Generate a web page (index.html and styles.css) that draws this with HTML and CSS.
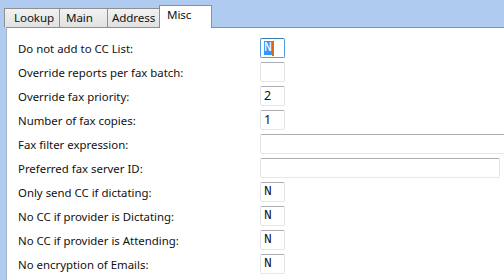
FILE: index.html
```html
<!DOCTYPE html>
<html lang="en">
<head>
    <meta charset="UTF-8">
    <title>Misc</title>
    <link rel="stylesheet" href="styles.css">
</head>
<body>
    <div class="tabs">
        <div class="tab lookup">Lookup</div>
        <div class="tab main">Main</div>
        <div class="tab address">Address</div>
        <div class="tab active">Misc</div>
    </div>
    <div class="panel">
        <div class="row">
            <label>Do not add to CC List:</label>
            <div class="box small focused mono"><span class="sel">N</span><span class="caret"></span></div>
        </div>
        <div class="row">
            <label>Override reports per fax batch:</label>
            <div class="box small"></div>
        </div>
        <div class="row">
            <label>Override fax priority:</label>
            <div class="box small">2</div>
        </div>
        <div class="row">
            <label>Number of fax copies:</label>
            <div class="box small">1</div>
        </div>
        <div class="row">
            <label>Fax filter expression:</label>
            <div class="box wide clipped"></div>
        </div>
        <div class="row">
            <label>Preferred fax server ID:</label>
            <div class="box wide"></div>
        </div>
        <div class="row">
            <label>Only send CC if dictating:</label>
            <div class="box small mono">N</div>
        </div>
        <div class="row">
            <label>No CC if provider is Dictating:</label>
            <div class="box small mono">N</div>
        </div>
        <div class="row">
            <label>No CC if provider is Attending:</label>
            <div class="box small mono">N</div>
        </div>
        <div class="row">
            <label>No encryption of Emails:</label>
            <div class="box small mono">N</div>
        </div>
    </div>
</body>
</html>
```

FILE: styles.css
```css
*{
    margin: 0;
    padding: 0;
    box-sizing: border-box;
}
body{
    width: 504px;
    height: 280px;
    overflow: hidden;
    background-color: #afcbef;
    font-family: "Noto Sans", "Open Sans", sans-serif;
    font-size: 11.4px;
    color: #111;
}
.tabs{
    display: flex;
    align-items: flex-end;
    height: 27px;
    padding-left: 4px;
}
.tab{
    height: 19px;
    padding-left: 6px;
    line-height: 18px;
    font-size: 11.6px;
    letter-spacing: -0.1px;
    white-space: nowrap;
    background: linear-gradient(#f2f2f2, #e1e1e1);
    border: 1px solid #8e8f8f;
    border-bottom: none;
    margin-right: -1px;
}
.lookup{
    width: 56px;
    padding-left: 9px;
}
.main{
    width: 49px;
}
.address{
    width: 53px;
    padding-left: 4px;
}
.tab.active{
    width: 53px;
    height: 23px;
    line-height: 18px;
    background: #fff;
    padding-left: 7px;
    margin-bottom: -1px;
    position: relative;
    z-index: 1;
}
.panel{
    margin-left: 6px;
    height: 260px;
    background-color: #fff;
    border-top: 1px solid #8e8f8f;
    border-left: 1px solid #a9b5c6;
    padding: 10px 0 0 11px;
    display: flex;
    flex-direction: column;
    gap: 4px;
}
.row{
    display: flex;
    align-items: center;
    height: 20px;
}
.row label{
    width: 242px;
    flex-shrink: 0;
}
.box{
    height: 20px;
    border: 1px solid #e2e3ea;
    border-top-color: #abadb3;
    border-bottom-color: #e3e9ef;
    border-radius: 2px;
    padding: 1px 3px;
    line-height: 16px;
    font-size: 12.5px;
    display: flex;
    align-items: center;
}
.small{
    width: 25px;
}
.wide{
    width: 240px;
}
.clipped{
    width: 260px;
    flex-shrink: 0;
}
.mono{
    font-family: "Liberation Mono", monospace;
    font-size: 13px;
}
.focused{
    border-color: #569de5;
    border-top-color: #3d7bad;
}
.sel{
    background-color: #3399ff;
    color: #fff;
    line-height: 14px;
}
.caret{
    width: 2px;
    height: 15px;
    background-color: #d56a23;
}
```
